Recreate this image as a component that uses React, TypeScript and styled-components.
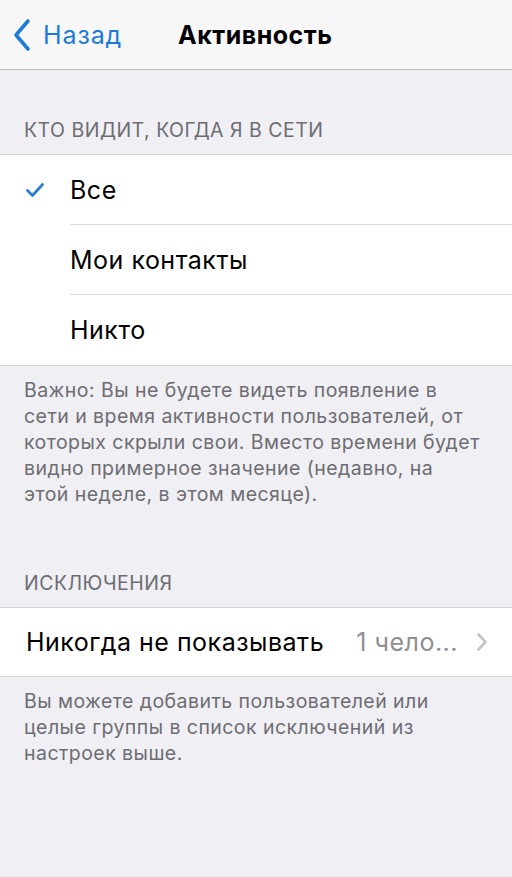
import React from "react";
import styled, { createGlobalStyle } from "styled-components";

const GlobalStyle = createGlobalStyle`
  html, body {
    margin: 0;
    padding: 0;
    background: #efeff4;
  }
  body {
    font-family: Inter, "Liberation Sans", Arial, sans-serif;
    -webkit-font-smoothing: antialiased;
  }
`;

type Option = { id: string; label: string };

const options: Option[] = [
  { id: "all", label: "Все" },
  { id: "contacts", label: "Мои контакты" },
  { id: "nobody", label: "Никто" },
];

export default function App() {
  const selected = "all";

  return (
    <Screen>
      <GlobalStyle />
      <NavBar>
        <BackButton>
          <svg width="20" height="34" viewBox="0 0 20 34">
            <path
              d="M16 3 L4 17 L16 31"
              fill="none"
              stroke="#1b7bd6"
              strokeWidth="3.6"
              strokeLinecap="round"
              strokeLinejoin="round"
            />
          </svg>
          <span>Назад</span>
        </BackButton>
        <Title>Активность</Title>
      </NavBar>

      <SectionHeader $top={48}>Кто видит, когда я в сети</SectionHeader>
      <Group>
        {options.map((opt, index) => (
          <OptionRow key={opt.id} $last={index === options.length - 1}>
            <CheckSlot>
              {opt.id === selected && (
                <svg width="20" height="16" viewBox="0 0 20 16">
                  <path
                    d="M2.5 8.5 L7.5 13.5 L17.5 2.5"
                    fill="none"
                    stroke="#2a7dd1"
                    strokeWidth="2.8"
                    strokeLinecap="round"
                    strokeLinejoin="round"
                  />
                </svg>
              )}
            </CheckSlot>
            <RowLabel>{opt.label}</RowLabel>
          </OptionRow>
        ))}
      </Group>
      <SectionFooter $right={29}>
        Важно: Вы не будете видеть появление в сети и время активности
        пользователей, от которых скрыли свои. Вместо времени будет видно
        примерное значение (недавно, на этой неделе, в этом месяце).
      </SectionFooter>

      <SectionHeader $top={64}>Исключения</SectionHeader>
      <Group>
        <LinkRow>
          <RowLabel>Никогда не показывать</RowLabel>
          <RowValue>1 чело...</RowValue>
          <svg width="12" height="20" viewBox="0 0 12 20">
            <path
              d="M2.5 2.5 L9.5 10 L2.5 17.5"
              fill="none"
              stroke="#c4c4c9"
              strokeWidth="2.6"
              strokeLinecap="round"
              strokeLinejoin="round"
            />
          </svg>
        </LinkRow>
      </Group>
      <SectionFooter $right={24}>
        Вы можете добавить пользователей или целые группы в список исключений
        из настроек выше.
      </SectionFooter>
    </Screen>
  );
}

const Screen = styled.div`
  width: 512px;
  min-height: 877px;
  background: #efeff4;
  display: flex;
  flex-direction: column;
`;

const NavBar = styled.header`
  height: 70px;
  box-sizing: border-box;
  background: #f7f7f7;
  border-bottom: 1px solid #b9b9bc;
  display: flex;
  align-items: center;
  padding-left: 12px;
`;

const BackButton = styled.div`
  display: flex;
  align-items: center;
  gap: 11px;
  color: #1b7bd6;
  font-size: 25px;
  letter-spacing: 0.9px;
  width: 166px;

  svg {
    flex-shrink: 0;
  }
`;

const Title = styled.h1`
  margin: 0;
  font-size: 25px;
  font-weight: 700;
  letter-spacing: 0.5px;
  color: #000;
`;

const SectionHeader = styled.div<{ $top: number }>`
  margin-top: ${(p) => p.$top}px;
  padding: 0 24px 12px;
  font-size: 19.5px;
  line-height: 24px;
  letter-spacing: 0.5px;
  text-transform: uppercase;
  color: #6d6d72;
`;

const Group = styled.section`
  background: #fff;
  border-top: 1px solid #d6d6da;
  border-bottom: 1px solid #d6d6da;
`;

const OptionRow = styled.div<{ $last: boolean }>`
  height: 70px;
  display: flex;
  align-items: center;
  position: relative;

  &::after {
    content: "";
    display: ${(p) => (p.$last ? "none" : "block")};
    position: absolute;
    left: 70px;
    right: 0;
    bottom: 0;
    height: 1px;
    background: #dcdce0;
  }
`;

const CheckSlot = styled.div`
  width: 70px;
  display: flex;
  padding-left: 25px;
  box-sizing: border-box;
`;

const RowLabel = styled.span`
  font-size: 25px;
  letter-spacing: 0.5px;
  color: #000;
`;

const LinkRow = styled.div`
  height: 68px;
  display: flex;
  align-items: center;
  padding: 0 24px 0 26px;
  gap: 18px;
`;

const RowValue = styled.span`
  margin-left: auto;
  font-size: 25px;
  letter-spacing: 0.5px;
  color: #8e8e93;
`;

const SectionFooter = styled.p<{ $right: number }>`
  margin: 0;
  padding: 11px ${(p) => p.$right}px 0 24px;
  font-size: 19.5px;
  line-height: 26px;
  letter-spacing: 0.45px;
  color: #6d6d72;
`;
